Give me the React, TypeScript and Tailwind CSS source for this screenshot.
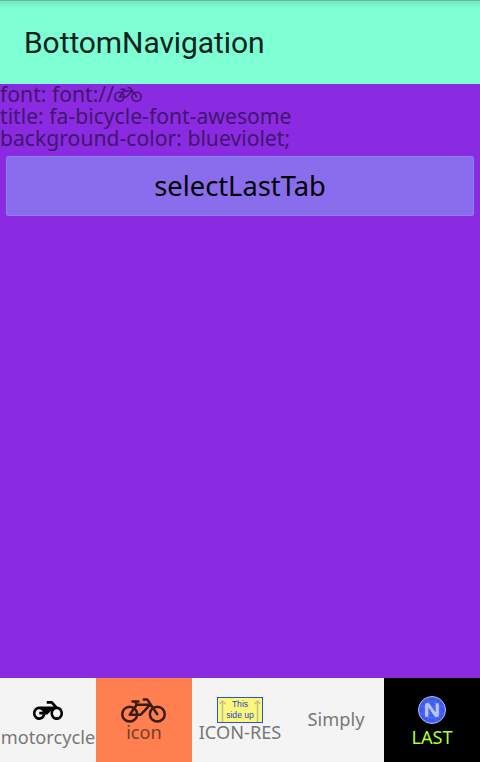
import React from "react";

function Bicycle({ className }: { className: string }) {
  return (
    <svg className={className} viewBox="0 0 45 25" preserveAspectRatio="none" fill="none" stroke="currentColor" strokeLinejoin="round" strokeLinecap="round">
      <circle cx="8.7" cy="16.2" r="7.4" />
      <circle cx="36.3" cy="16.2" r="7.4" />
      <path d="M8.7 16.7 L15.7 6.8 H29 L19.8 16.7 Z M15.7 6.8 L14.4 4 M11.5 3.6 H17.5 M22.8 1.4 H26.2 L36.3 16.2" />
    </svg>
  );
}

function Motorcycle() {
  return (
    <svg className="h-[19px] w-[30px]" viewBox="0 5 24 14" preserveAspectRatio="none" fill="currentColor">
      <path d="M19.44 9.03L15.41 5H11v2h3.59l2 2H5c-2.8 0-5 2.2-5 5s2.2 5 5 5c2.46 0 4.45-1.69 4.9-4h1.65l2.77-2.77c-.21.54-.32 1.14-.32 1.77 0 2.8 2.2 5 5 5s5-2.2 5-5c0-2.65-1.97-4.77-4.56-4.97zM7.82 15C7.4 16.15 6.28 17 5 17c-1.63 0-3-1.37-3-3s1.37-3 3-3c1.28 0 2.4.85 2.82 2H5v2h2.82zM19 17c-1.66 0-3-1.34-3-3s1.34-3 3-3 3 1.34 3 3-1.34 3-3 3z" />
    </svg>
  );
}

function UpArrow() {
  return (
    <svg className="h-[22px] w-[7px] shrink-0" viewBox="0 0 7 22" fill="none" stroke="#c2c28c" strokeWidth="1.6">
      <path d="M3.5 22V1M0.6 4L3.5 1L6.4 4" />
    </svg>
  );
}

function Crate() {
  return (
    <div className="flex h-[26px] w-[46px] items-end justify-between border border-[#2d50e0] bg-[#fbf87c] px-px">
      <UpArrow />
      <div className="-mx-px pb-px text-center font-['Liberation_Sans',sans-serif] text-[8.6px] leading-[11px] whitespace-nowrap text-[#1c3fd0]">
        This
        <br />
        side up
      </div>
      <UpArrow />
    </div>
  );
}

function NativeLogo() {
  return (
    <svg className="size-7" viewBox="0 0 28 28" fill="none">
      <circle cx="14" cy="14" r="13.5" fill="#3c5af0" stroke="#b4c2f5" strokeWidth="1" />
      <path d="M1 10H27M1 18H27M10 1V27M18 1V27M4 4L24 24M24 4L4 24" stroke="#6c85ff" strokeWidth=".5" />
      <circle cx="14" cy="14" r="8" stroke="#6c85ff" strokeWidth=".5" />
      <path d="M8.7 20.8V8.6H10.2L17.8 19.4H19.3V7.2" stroke="#b5c3fb" strokeWidth="3.2" strokeLinejoin="round" />
    </svg>
  );
}

export default function App() {
  return (
    <div className="flex h-[762px] w-[480px] flex-col overflow-hidden bg-[#8a2be2] font-['Noto_Sans',sans-serif]">
      <header className="flex h-[84px] shrink-0 items-center border-t border-[#62b79d] bg-[#7fffd4] bg-linear-to-b from-[#74e9c2] to-[#7fffd4] to-10% pl-6 font-['Roboto',sans-serif] text-[30px] tracking-[-0.08px] text-[#10221d]">
        <h1>BottomNavigation</h1>
      </header>
      <main className="flex-1">
        <div className="text-[21.15px] leading-[20px] whitespace-nowrap text-[#43156e]">
          <p className="flex h-[22px]">
            font: font://
            <Bicycle className="mt-[3px] h-[15px] w-7 stroke-[2.6]" />
          </p>
          <p className="h-[22px]">title: fa-bicycle-font-awesome</p>
          <p className="h-[22px]">background-color: blueviolet;</p>
        </div>
        <button className="mx-1.5 mt-1.5 flex h-[60px] w-[468px] items-center justify-center rounded-[2px] border border-[#8780ed] bg-[#8a6dec] text-[27.3px] text-black">
          selectLastTab
        </button>
      </main>
      <nav className="grid h-[84px] shrink-0 grid-cols-5 bg-[#f4f4f4] text-[18.2px] leading-[22px] whitespace-nowrap text-[#777777]">
        <div className="flex flex-col items-center gap-[6px] pt-[23px]">
          <span className="h-[19px] text-black"><Motorcycle /></span>
          <span>motorcycle</span>
        </div>
        <div className="flex flex-col items-center bg-[#ff7f50] pt-5">
          <Bicycle className="mr-px h-[25px] w-[45px] stroke-[2.5] text-[#3a1c11]" />
          <span className="-mt-0.5 text-[#7a3d26]">icon</span>
        </div>
        <div className="flex flex-col items-center pt-[19px]">
          <Crate />
          <span className="-mt-0.5">ICON-RES</span>
        </div>
        <div className="flex items-center justify-center pb-0.5">Simply</div>
        <div className="flex flex-col items-center gap-0.5 bg-black pt-[18px] text-[#adff2f]">
          <NativeLogo />
          <span>LAST</span>
        </div>
      </nav>
    </div>
  );
}
